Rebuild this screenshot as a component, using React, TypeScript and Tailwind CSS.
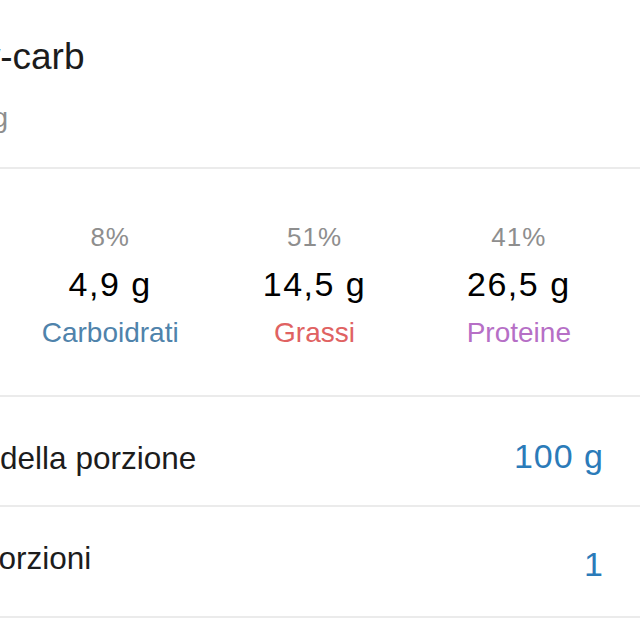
import React from 'react';

const macros = [
  { pct: '8%', value: '4,9 g', label: 'Carboidrati', color: 'text-[#4f83ab]' },
  { pct: '51%', value: '14,5 g', label: 'Grassi', color: 'text-[#e06262]' },
  { pct: '41%', value: '26,5 g', label: 'Proteine', color: 'text-[#b66fc6]' },
];

const rows = [
  {
    label: 'Dimensione della porzione',
    value: '100 g',
    box: 'h-[110px] pt-[46px]',
    shift: '-ml-[175px]',
    nudge: '-mt-[4px]',
  },
  {
    label: 'Numero di porzioni',
    value: '1',
    box: 'h-[111px] pt-[36px]',
    shift: '-ml-[173px]',
    nudge: 'mt-[4px]',
  },
];

export default function App() {
  return (
    <div
      className="h-[640px] w-[640px] overflow-hidden bg-white text-black"
      style={{ fontFamily: '"Liberation Sans", Arial, sans-serif' }}
    >
      {/* food header, left side cut off by the crop */}
      <div className="border-b-2 border-[#ebebeb] pt-[38px] pb-[35px]">
        <div className="-ml-[152px] whitespace-nowrap text-[37px] leading-none text-[#1c1c1c]">
          Pane low-carb
        </div>
        <div className="-ml-[160px] mt-[29px] whitespace-nowrap text-[28px] leading-none text-[#8e8e8e]">
          Conad, 100 g
        </div>
      </div>

      {/* macro breakdown */}
      <div className="grid grid-cols-3 border-b-2 border-[#ebebeb] pl-[8px] pr-[19px] pt-[55px] pb-[48px]">
        {macros.map((m) => (
          <div key={m.label} className="flex flex-col items-center">
            <span className="text-[26px] leading-none tracking-[1px] text-[#8e8e8e]">{m.pct}</span>
            <span className="mt-[17px] text-[34px] leading-none tracking-[1.5px] text-black">
              {m.value}
            </span>
            <span className={`mt-[18px] text-[28px] leading-none ${m.color}`}>{m.label}</span>
          </div>
        ))}
      </div>

      {rows.map((r) => (
        <div
          key={r.label}
          className={`flex items-start justify-between border-b-2 border-[#ebebeb] pr-[36px] ${r.box}`}
        >
          <span className={`whitespace-nowrap text-[31.5px] leading-none text-[#1c1c1c] ${r.shift}`}>
            {r.label}
          </span>
          <span className={`text-[34px] leading-none tracking-[1px] text-[#2b7bb9] ${r.nudge}`}>
            {r.value}
          </span>
        </div>
      ))}
    </div>
  );
}
